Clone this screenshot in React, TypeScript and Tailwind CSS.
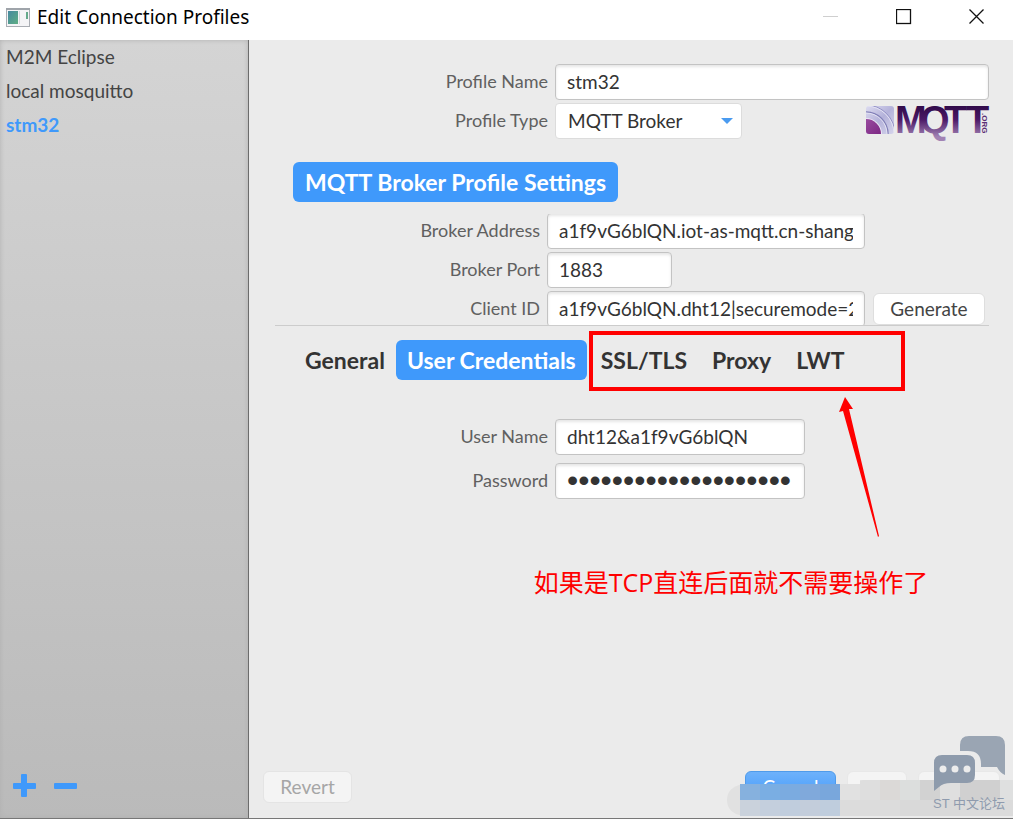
import React, { useState } from 'react';

const profiles = ['M2M Eclipse', 'local mosquitto', 'stm32'];
const tabs = ['General', 'User Credentials'];
const extraTabs = ['SSL/TLS', 'Proxy', 'LWT'];

const fieldClass =
  'h-9 rounded border border-[#c3c3c3] bg-white px-[11px] pb-[2px] text-[#333333] shadow-[inset_0_2px_3px_#e6e6e6] outline-none';
const labelClass = 'pb-[3px] text-right text-[18px] leading-6 text-[#606060]';
const buttonClass = 'h-8 rounded-md border text-[19px] leading-6';

// Pixelated patch over the dialog buttons
const mosaic = [
  { x: 13, y: 4, w: 20, h: 16, fill: '#86b1de' },
  { x: 33, y: 4, w: 20, h: 16, fill: '#7aaee3' },
  { x: 53, y: 4, w: 20, h: 16, fill: '#7babe0' },
  { x: 73, y: 4, w: 20, h: 16, fill: '#80a9db' },
  { x: 93, y: 4, w: 20, h: 16, fill: '#79a7dc' },
  { x: 13, y: 20, w: 20, h: 16, fill: '#cad2dc' },
  { x: 33, y: 20, w: 20, h: 16, fill: '#c4cfdd' },
  { x: 53, y: 20, w: 20, h: 16, fill: '#c0cddd' },
  { x: 73, y: 20, w: 20, h: 16, fill: '#c3cddb' },
  { x: 93, y: 20, w: 20, h: 16, fill: '#bfcddd' },
  { x: 113, y: 4, w: 20, h: 16, fill: '#e1e1e1' },
  { x: 133, y: 0, w: 20, h: 20, fill: '#dedede' },
  { x: 153, y: 0, w: 20, h: 20, fill: '#dbd9d7' },
  { x: 173, y: 0, w: 20, h: 20, fill: '#dcdedd' },
  { x: 193, y: 0, w: 20, h: 20, fill: '#d2d2d2' },
  { x: 213, y: 0, w: 20, h: 20, fill: '#dfdfdf' },
  { x: 233, y: 0, w: 40, h: 20, fill: '#d0d0d0' },
  { x: 273, y: 0, w: 13, h: 20, fill: '#dfe0e0' },
  { x: 113, y: 20, w: 60, h: 16, fill: '#dcdcdc' },
  { x: 173, y: 20, w: 60, h: 16, fill: '#d9d9d9' },
  { x: 233, y: 20, w: 53, h: 16, fill: '#dbdbdb' },
];

const WindowIcon: React.FC = () => (
  <svg width="24" height="19" viewBox="0 0 24 19">
    <defs>
      <linearGradient id="pane" x1="0" y1="0" x2="1" y2="1">
        <stop offset="0" stopColor="#4689a0" />
        <stop offset="1" stopColor="#5fae84" />
      </linearGradient>
    </defs>
    <rect x="0.5" y="0.5" width="23" height="18" fill="#f4f4f6" stroke="#a9adb3" />
    <rect x="0" y="0" width="24" height="2" fill="#9fa4aa" />
    <rect x="2" y="3" width="10" height="13" fill="url(#pane)" />
    <rect x="13" y="3" width="1" height="13" fill="#d6d9dd" />
    <rect x="20" y="4" width="2" height="7" fill="#65aa8c" />
  </svg>
);

const MqttLogo: React.FC = () => (
  <svg className="overflow-visible" width="124" height="36" viewBox="0 0 124 36" role="img" aria-label="MQTT.ORG">
    <defs>
      <linearGradient id="ink" x1="0" y1="2" x2="0" y2="34" gradientUnits="userSpaceOnUse">
        <stop offset="0" stopColor="#2f0a48" />
        <stop offset="0.45" stopColor="#4a1866" />
        <stop offset="1" stopColor="#a283b4" />
      </linearGradient>
      <linearGradient id="waves" x1="0" y1="0" x2="1" y2="1">
        <stop offset="0" stopColor="#dddcf0" />
        <stop offset="0.5" stopColor="#b4b2da" />
        <stop offset="1" stopColor="#d6d5ec" />
      </linearGradient>
      <linearGradient id="core" x1="0" y1="0" x2="1" y2="1">
        <stop offset="0" stopColor="#a65cab" />
        <stop offset="1" stopColor="#6f1677" />
      </linearGradient>
      <clipPath id="badge">
        <rect x="1" y="3" width="28" height="28" rx="3" />
      </clipPath>
    </defs>
    <g clipPath="url(#badge)">
      <rect x="1" y="3" width="28" height="28" fill="url(#waves)" />
      <circle cx="1" cy="31" r="29" fill="none" stroke="#9392c6" />
      <circle cx="1" cy="31" r="28" fill="none" stroke="#e4e3f3" />
      <circle cx="1" cy="31" r="22" fill="none" stroke="#8280b8" strokeWidth="1.4" />
      <circle cx="1" cy="31" r="21" fill="none" stroke="#e4e3f3" />
      <circle cx="1" cy="31" r="16" fill="#e9e6f4" />
      <circle cx="1" cy="31" r="15" fill="url(#core)" />
    </g>
    <text
      x="30 55 79 101"
      y="30"
      fontFamily="Liberation Sans, sans-serif"
      fontWeight="700"
      fontSize="38"
      fill="url(#ink)"
    >
      MQTT
    </text>
    <text
      transform="translate(117 10) rotate(90)"
      fontFamily="Liberation Sans, sans-serif"
      fontWeight="700"
      fontSize="8"
      fill="#5b2d75"
    >
      .ORG
    </text>
  </svg>
);

const Watermark: React.FC = () => (
  <div className="pointer-events-none absolute right-2 bottom-[2px] flex flex-col items-center">
    <svg width="72" height="57" viewBox="0 0 72 57">
      <path
        d="M27 16V10Q27 1 36 1H63Q72 1 72 10V40Q67 38 64 32H48V29Q48 16 35 16Z"
        fill="#9aa5b3"
      />
      <path
        d="M9 20H34Q42 20 42 28V40Q42 48 34 48H18Q10 48 6 52L1 56V28Q1 20 9 20Z"
        fill="#8e9bac"
      />
      <circle cx="10" cy="34" r="3.5" fill="#ececec" />
      <circle cx="22" cy="34" r="3.5" fill="#ececec" />
      <circle cx="34" cy="34" r="3.5" fill="#ececec" />
    </svg>
    <span className="font-['Liberation_Sans','Noto_Sans_CJK_SC',sans-serif] text-[13px] leading-6 whitespace-nowrap text-[#8f9bae]">
      ST 中文论坛
    </span>
  </div>
);

const TitleBar: React.FC = () => (
  <header className="flex h-10 items-center bg-white pb-[6px] pl-[6px] text-black">
    <WindowIcon />
    <h1 className="ml-[7px] flex-1 font-['Noto_Sans',sans-serif] text-[19px] leading-6 whitespace-nowrap">
      Edit Connection Profiles
    </h1>
    <button aria-label="Minimize" disabled className="flex h-8 w-[73px] items-center justify-center">
      <svg width="16" height="16" viewBox="0 0 16 16">
        <path d="M0 7.5H15" stroke="#cfcfcf" />
      </svg>
    </button>
    <button aria-label="Maximize" className="flex h-8 w-[73px] items-center justify-center">
      <svg width="16" height="16" viewBox="0 0 16 16">
        <rect x="0.5" y="0.5" width="14" height="14" fill="none" stroke="#111111" strokeWidth="1.3" />
      </svg>
    </button>
    <button aria-label="Close" className="flex h-8 w-[73px] items-center justify-center">
      <svg width="16" height="16" viewBox="0 0 16 16">
        <path d="M0.5 0.5L14.5 14.5M14.5 0.5L0.5 14.5" stroke="#111111" strokeWidth="1.3" />
      </svg>
    </button>
  </header>
);

const App: React.FC = () => {
  const [selected, setSelected] = useState('stm32');
  const [activeTab, setActiveTab] = useState('User Credentials');

  const tabClass = (tab: string) =>
    `h-10 rounded-md px-[11px] text-[23px] leading-8 font-bold whitespace-nowrap ${
      tab === activeTab ? 'bg-[#3f99fb] text-white' : 'text-[#333333]'
    }`;

  return (
    <div className="flex min-h-screen flex-col border-b border-[#777777] bg-white font-['Lato',sans-serif]">
      <TitleBar />

      <div className="flex flex-1">
        {/* Profile list */}
        <aside className="flex w-[249px] shrink-0 flex-col justify-between border-r border-[#6c6c6c] bg-linear-to-b from-[#d4d4d4] to-[#bababa] shadow-[inset_0_0_5px_#b0b0b0]">
          <ul>
            {profiles.map((name) => (
              <li key={name}>
                <button
                  onClick={() => setSelected(name)}
                  className={`h-[34px] w-full px-[6px] text-left text-[19px] leading-6 ${
                    name === selected ? 'font-bold text-[#3f99fb]' : 'text-[#444444]'
                  }`}
                >
                  {name}
                </button>
              </li>
            ))}
          </ul>
          <div className="flex gap-[18px] px-3 pb-5">
            <button aria-label="Add profile">
              <svg width="24" height="24" viewBox="0 0 24 24" fill="#3f99fb">
                <rect x="1" y="9" width="23" height="6" rx="1" />
                <rect x="9" y="0" width="6" height="23" rx="1" />
              </svg>
            </button>
            <button aria-label="Remove profile">
              <svg width="24" height="24" viewBox="0 0 24 24" fill="#3f99fb">
                <rect x="0" y="9" width="23" height="6" rx="1" />
              </svg>
            </button>
          </div>
        </aside>

        <main className="relative flex min-w-0 flex-1 flex-col justify-between bg-[#ebebeb] pt-6">
          <form className="pr-6 pl-[26px]" onSubmit={(e) => e.preventDefault()}>
            <div className="grid grid-cols-[273px_1fr] items-center gap-x-[7px] gap-y-[3px]">
              <label htmlFor="name" className={labelClass}>Profile Name</label>
              <input id="name" defaultValue="stm32" className={`w-full text-[19px] ${fieldClass}`} />
              <label htmlFor="type" className={labelClass}>Profile Type</label>
              <div className="flex justify-between">
                <div className="relative">
                  <select
                    id="type"
                    className="h-9 w-[187px] appearance-none rounded border border-[#dcdcdc] bg-white px-3 text-[19px] text-[#333333] outline-none"
                  >
                    <option>MQTT Broker</option>
                  </select>
                  <svg className="pointer-events-none absolute top-[14px] right-2" width="14" height="8" viewBox="0 0 14 8">
                    <path d="M1 1H13L7 7Z" fill="#4a9bf0" />
                  </svg>
                </div>
                <MqttLogo />
              </div>
            </div>

            <div className="mt-[23px] pl-[18px]">
              <button className="h-10 rounded-md bg-[#3f99fb] px-3 text-[23px] leading-8 font-bold whitespace-nowrap text-white">
                MQTT Broker Profile Settings
              </button>
            </div>

            {/* Broker settings, cut off by the split pane */}
            <div className="mt-3 h-28 overflow-hidden border-b border-[#cccccc]">
              <div className="-mt-px grid grid-cols-[265px_1fr] items-center gap-x-[7px] gap-y-[3px]">
                <label htmlFor="address" className={labelClass}>Broker Address</label>
                <input
                  id="address"
                  defaultValue="a1f9vG6blQN.iot-as-mqtt.cn-shanghai"
                  className={`w-[318px] text-[19px] ${fieldClass}`}
                />
                <label htmlFor="port" className={labelClass}>Broker Port</label>
                <input id="port" defaultValue="1883" className={`w-[125px] text-[19px] ${fieldClass}`} />
                <label htmlFor="client" className={labelClass}>Client ID</label>
                <div className="flex items-center gap-2">
                  <input
                    id="client"
                    defaultValue="a1f9vG6blQN.dht12|securemode=2"
                    className={`w-[318px] text-[19px] ${fieldClass}`}
                  />
                  <button className={`w-28 border-[#dedede] bg-white text-[#444444] ${buttonClass}`}>
                    Generate
                  </button>
                </div>
              </div>
            </div>

            {/* Tabs */}
            <div className="mt-[14px] flex gap-[3px] pl-[19px]">
              <div className="flex">
                {tabs.map((tab) => (
                  <button key={tab} onClick={() => setActiveTab(tab)} className={tabClass(tab)}>
                    {tab}
                  </button>
                ))}
              </div>
              <div className="relative flex gap-[3px]">
                {extraTabs.map((tab) => (
                  <button key={tab} onClick={() => setActiveTab(tab)} className={tabClass(tab)}>
                    {tab}
                  </button>
                ))}
                {/* Red note */}
                <div className="pointer-events-none absolute -top-[9px] -left-px h-[60px] w-[316px] border-4 border-[#ff0000]" />
                <svg className="pointer-events-none absolute top-14 left-[247px]" width="44" height="142" viewBox="0 0 44 142">
                  <path d="M8 1L16 13L12 13L42 140L41 141L6 15L2 16Z" fill="#ff0000" />
                </svg>
                <p className="pointer-events-none absolute top-56 -left-14 font-['Open_Sans','Noto_Sans_CJK_SC',sans-serif] text-[25px] leading-9 whitespace-nowrap text-[#ff0000]">
                  如果是TCP直连后面就不需要操作了
                </p>
              </div>
            </div>

            <div className="mt-[39px] grid grid-cols-[273px_250px] items-center gap-x-[7px] gap-y-2">
              <label htmlFor="user" className={labelClass}>User Name</label>
              <input id="user" defaultValue="dht12&a1f9vG6blQN" className={`text-[19px] ${fieldClass}`} />
              <label htmlFor="password" className={labelClass}>Password</label>
              <input
                id="password"
                type="password"
                defaultValue="12345678901234567890"
                className={`font-['Liberation_Sans',sans-serif] text-[32px] ${fieldClass}`}
              />
            </div>
          </form>

          <footer className="flex justify-between pr-[13px] pb-[15px] pl-[14px]">
            <button disabled className={`w-[89px] border-[#e4e4e4] bg-[#f4f4f4] text-[#a6a6a6] ${buttonClass}`}>
              Revert
            </button>
            <div className="flex gap-[11px]">
              <button className={`w-[91px] border-[#4f9bea] bg-linear-to-b from-[#6db1fb] to-[#3f99fb] text-white ${buttonClass}`}>
                Cancel
              </button>
              <button aria-label="OK" className={`w-[60px] border-[#e8e8e8] bg-[#f4f4f4] ${buttonClass}`} />
              <button aria-label="Apply" className={`w-[82px] border-[#e8e8e8] bg-[#f4f4f4] ${buttonClass}`} />
            </div>
          </footer>

          <svg className="pointer-events-none absolute right-0 bottom-[2px]" width="286" height="36" viewBox="0 0 286 36">
            <path d="M16 4H286V36H16Q0 33 0 20Q0 7 16 4Z" fill="#e1e1e1" />
            <clipPath id="patch">
              <path d="M0 4H126Q130 0 136 0H286V36H0Z" />
            </clipPath>
            <g clipPath="url(#patch)" shapeRendering="crispEdges">
              {mosaic.map((m) => (
                <rect key={`${m.x}-${m.y}`} x={m.x} y={m.y} width={m.w} height={m.h} fill={m.fill} />
              ))}
            </g>
          </svg>
          <Watermark />
        </main>
      </div>
    </div>
  );
};

export default App;
